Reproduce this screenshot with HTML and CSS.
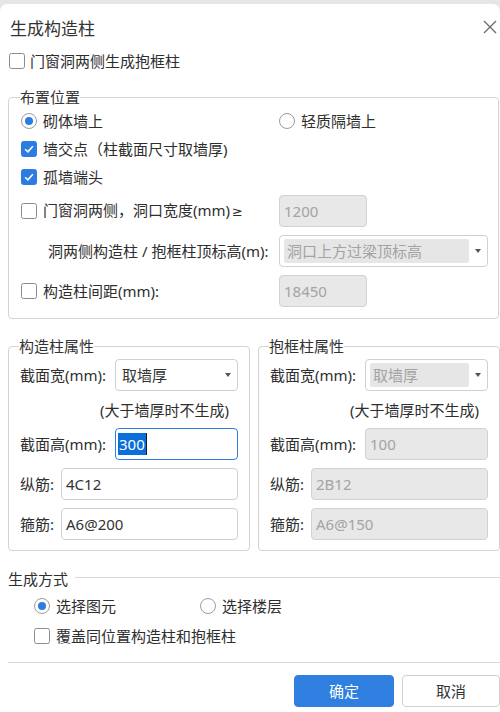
FILE: index.html
```html
<!DOCTYPE html>
<html lang="zh-CN">
<head>
<meta charset="utf-8">
<title>生成构造柱</title>
<link rel="stylesheet" href="styles.css">
</head>
<body>
<div class="dialog">
  <div class="header">
    <span class="title">生成构造柱</span>
    <svg class="close" width="14" height="14" viewBox="0 0 14 14"><path d="M1 1 L13 13 M13 1 L1 13" stroke="#6a6a6a" stroke-width="1.3" fill="none"/></svg>
  </div>

  <div class="opt top-row"><span class="cb"></span><span>门窗洞两侧生成抱框柱</span></div>

  <fieldset class="fs place">
    <legend>布置位置</legend>
    <div class="place-grid">
      <div class="opt"><span class="radio on"></span><span>砌体墙上</span></div>
      <div class="opt"><span class="radio"></span><span>轻质隔墙上</span></div>
      <div class="opt span2"><span class="cb on"><svg viewBox="0 0 16 16"><path d="M3.6 8.3 L6.7 11.2 L12.4 4.9" stroke="#fff" stroke-width="1.8" fill="none"/></svg></span><span>墙交点（柱截面尺寸取墙厚)</span></div>
      <div class="opt span2"><span class="cb on"><svg viewBox="0 0 16 16"><path d="M3.6 8.3 L6.7 11.2 L12.4 4.9" stroke="#fff" stroke-width="1.8" fill="none"/></svg></span><span>孤墙端头</span></div>
      <div class="opt"><span class="cb"></span><span>门窗洞两侧，洞口宽度(mm)<span class="ge">≥</span></span></div>
      <div class="input dis short">1200</div>
      <div class="sub">洞两侧构造柱 / 抱框柱顶标高(m):</div>
      <div class="select dis"><div class="sel-in">洞口上方过梁顶标高</div><span class="arrow"></span></div>
      <div class="opt"><span class="cb"></span><span>构造柱间距(mm):</span></div>
      <div class="input dis short">18450</div>
    </div>
  </fieldset>

  <div class="props">
    <fieldset class="fs prop">
      <legend>构造柱属性</legend>
      <div class="prow"><span class="lbl wide">截面宽(mm):</span><div class="select"><div class="sel-in">取墙厚</div><span class="arrow"></span></div></div>
      <div class="note">(大于墙厚时不生成)</div>
      <div class="prow gap8"><span class="lbl wide">截面高(mm):</span><div class="input focus"><span class="selected">300</span></div></div>
      <div class="prow gap8"><span class="lbl">纵筋:</span><div class="input">4C12</div></div>
      <div class="prow gap8"><span class="lbl">箍筋:</span><div class="input">A6@200</div></div>
    </fieldset>
    <fieldset class="fs prop">
      <legend>抱框柱属性</legend>
      <div class="prow"><span class="lbl wide">截面宽(mm):</span><div class="select dis"><div class="sel-in">取墙厚</div><span class="arrow"></span></div></div>
      <div class="note">(大于墙厚时不生成)</div>
      <div class="prow gap8"><span class="lbl wide">截面高(mm):</span><div class="input dis">100</div></div>
      <div class="prow gap8"><span class="lbl">纵筋:</span><div class="input dis">2B12</div></div>
      <div class="prow gap8"><span class="lbl">箍筋:</span><div class="input dis">A6@150</div></div>
    </fieldset>
  </div>

  <div class="group-title"><span>生成方式</span></div>
  <div class="mode-row">
    <div class="opt"><span class="radio on"></span><span>选择图元</span></div>
    <div class="opt"><span class="radio"></span><span>选择楼层</span></div>
  </div>
  <div class="opt cover-row"><span class="cb"></span><span>覆盖同位置构造柱和抱框柱</span></div>

  <div class="sep"></div>

  <div class="buttons">
    <div class="btn primary">确定</div>
    <div class="btn">取消</div>
  </div>
</div>
</body>
</html>
```

FILE: styles.css
```css
* { box-sizing: border-box; }

html, body {
  margin: 0;
  padding: 0;
}

body {
  width: 500px;
  height: 712px;
  overflow: hidden;
  background: #e6e6e6;
  font-family: "Noto Sans", "Noto Sans CJK SC", sans-serif;
  font-size: 15px;
  line-height: 20px;
  color: #2e2e2e;
}

.dialog {
  margin-top: 4px;
  height: 708px;
  background: #fff;
  border-radius: 7px 7px 0 0;
  overflow: hidden;
}

.header {
  display: flex;
  align-items: center;
  justify-content: space-between;
  height: 37px;
  padding: 13px 3px 0 10px;
}

.title {
  font-size: 17px;
  line-height: 24px;
  color: #333;
}

.close {
  display: block;
  margin-top: -4px;
}

.opt {
  display: flex;
  align-items: center;
  gap: 6px;
  height: 20px;
  white-space: nowrap;
}

.ge {
  font-family: "DejaVu Sans", sans-serif;
  font-size: 13px;
  margin-left: 2px;
}

.top-row {
  margin: 10px 0 0 9px;
  gap: 5px;
}

.cb {
  flex: none;
  width: 16px;
  height: 16px;
  border: 1px solid #8c8c8c;
  border-radius: 2.5px;
  background: #fff;
  display: flex;
  align-items: center;
  justify-content: center;
}

.cb.on {
  background: #2b7de1;
  border-color: #2b7de1;
}

.cb svg {
  width: 16px;
  height: 16px;
  display: block;
}

.radio {
  flex: none;
  width: 16px;
  height: 16px;
  border: 1px solid #9c9c9c;
  border-radius: 50%;
  background: #fff;
  display: flex;
  align-items: center;
  justify-content: center;
}

.radio.on::after {
  content: "";
  width: 8px;
  height: 8px;
  border-radius: 50%;
  background: #2b7de1;
}

.fs {
  margin: 0;
  border: 1px solid #d3d3d3;
  border-radius: 4px;
  min-width: 0;
}

.fs legend {
  padding: 0;
  margin-left: -1px;
  font-size: 15px;
  line-height: 20px;
  color: #333;
}

.place {
  margin: 16px 0 0 8px;
  width: 491px;
  padding: 4px 10px 11px 12px;
}

.place-grid {
  display: grid;
  grid-template-columns: 258px 1fr;
  grid-template-rows: 20px 20px 20px 32px 32px 32px;
  row-gap: 8px;
  align-items: center;
}

.span2 { grid-column: 1 / 3; }

.sub {
  padding-left: 27px;
  white-space: nowrap;
}

.input {
  height: 32px;
  border: 1px solid #d0d0d0;
  border-radius: 4px;
  background: #fff;
  padding: 0 4px;
  display: flex;
  align-items: center;
  color: #333;
  flex: 1;
  min-width: 0;
}

.input.short {
  width: 88px;
}

.input.dis {
  background: #e8e8e8;
  color: #a3a3a3;
  border-color: #d2d2d2;
}

.input.focus {
  border-color: #2f7fe0;
  padding-left: 2px;
}

.selected {
  background: #0a6fd8;
  color: #fff;
  line-height: 22px;
  padding: 0 1px;
  border-right: 1px solid #1a1a1a;
}

.select {
  height: 32px;
  border: 1px solid #d0d0d0;
  border-radius: 4px;
  background: #fff;
  display: flex;
  align-items: center;
  flex: 1;
  min-width: 0;
}

.sel-in {
  flex: 1;
  align-self: stretch;
  display: flex;
  align-items: center;
  padding-left: 6px;
  color: #333;
}

.select.dis .sel-in {
  margin: 3px 0 3px 4px;
  padding-left: 3px;
  background: #e6e6e6;
  border-radius: 2px;
  color: #a3a3a3;
}

.arrow {
  flex: none;
  width: 18px;
  display: flex;
  justify-content: center;
}

.arrow::after {
  content: "";
  border-left: 3.5px solid transparent;
  border-right: 3.5px solid transparent;
  border-top: 4px solid #555;
}

.props {
  display: flex;
  gap: 8px;
  margin: 17px 0 0 8px;
}

.prop {
  width: 242px;
  padding: 3px 11px 10px 11px;
}

.prow {
  display: flex;
  align-items: center;
  height: 32px;
}

.gap8 { margin-top: 8px; }

.lbl {
  flex: none;
  width: 41px;
  white-space: nowrap;
}

.lbl.wide { width: 95px; }

.note {
  margin-top: 9px;
  height: 20px;
  text-align: right;
  padding-right: 9px;
  white-space: nowrap;
}

.group-title {
  display: flex;
  align-items: center;
  height: 20px;
  margin: 18px 0 0 8px;
}

.group-title::after {
  content: "";
  flex: 1;
  height: 1px;
  background: #d8d8d8;
  margin: 0 0 3px 7px;
}

.mode-row {
  display: grid;
  grid-template-columns: 166px auto;
  margin: 7px 0 0 34px;
}

.cover-row {
  margin: 10px 0 0 34px;
}

.sep {
  height: 1px;
  background: #d8d8d8;
  margin: 16px 0 0 8px;
}

.buttons {
  display: flex;
  justify-content: flex-end;
  gap: 8px;
  margin-top: 12px;
}

.btn {
  width: 98px;
  height: 32px;
  border: 1px solid #cfcfcf;
  border-radius: 4px;
  background: #fff;
  display: flex;
  align-items: center;
  justify-content: center;
  color: #333;
}

.btn.primary {
  width: 100px;
  background: #2e7fe0;
  border-color: #2e7fe0;
  color: #fff;
}
```
